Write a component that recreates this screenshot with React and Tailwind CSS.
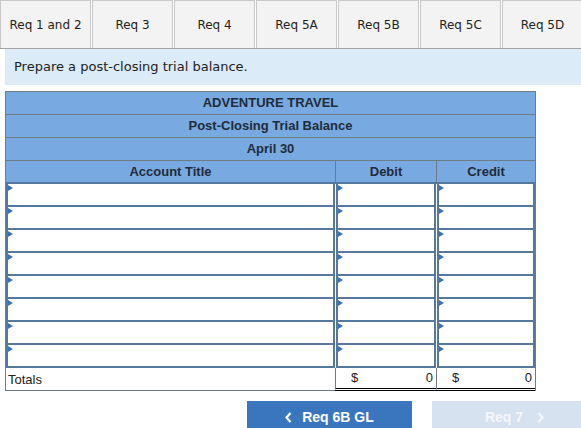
import React from "react";

const tabs = ["Req 1 and 2", "Req 3", "Req 4", "Req 5A", "Req 5B", "Req 5C", "Req 5D"];

const Marker = () => (
  <span className="absolute left-0 top-[1px] w-0 h-0 border-y-[3px] border-y-transparent border-l-[5px] border-l-[#3a72b8]" />
);

const InputCell = ({ first }) => (
  <div className={`relative h-[23px] bg-white border-b-2 border-r-2 border-l-2 border-[#56789d] ${first ? "" : "ml-[1px]"}`}>
    <Marker />
  </div>
);

const App = () => {
  return (
    <div className="w-[581px] h-[428px] overflow-hidden bg-white" style={{ fontFamily: "'Liberation Sans', Arial, sans-serif" }}>
      {/* tabs */}
      <div className="flex gap-[1px] h-[49px] border-b border-[#a3a3a3]" style={{ fontFamily: "'DejaVu Sans', Verdana, sans-serif" }}>
        {tabs.map((t, i) => (
          <div
            key={t}
            className={`shrink-0 flex items-center justify-center bg-[#f3f3f3] border-x border-t border-[#c8c8c8] text-[12px] text-[#222] ${i === 0 ? "w-[91px]" : "w-[81px]"}`}
          >
            {t}
          </div>
        ))}
      </div>

      <div className="ml-[5px] h-[36px] bg-[#dbebf8] flex items-center pl-[9px] text-[13px] text-[#222]" style={{ fontFamily: "'DejaVu Sans', Verdana, sans-serif" }}>
        Prepare a post-closing trial balance.
      </div>

      {/* trial balance */}
      <div className="ml-[5px] mt-[6px] w-[531px] border border-[#6f7b87] text-[#1f2c3a]">
        {["ADVENTURE TRAVEL", "Post-Closing Trial Balance", "April 30"].map((h) => (
          <div key={h} className="h-[23px] bg-[#78a9e0] border-b border-[#6f7b87] flex items-center justify-center text-[13px] font-bold">
            {h}
          </div>
        ))}
        <div className="grid grid-cols-[329px_101px_99px] h-[23px] bg-[#78a9e0] text-[13px] font-bold border-b-2 border-[#56789d]">
          <div className="flex items-center justify-center">Account Title</div>
          <div className="flex items-center justify-center border-l border-[#6f7b87]">Debit</div>
          <div className="flex items-center justify-center border-l border-[#6f7b87]">Credit</div>
        </div>
        {Array.from({ length: 8 }).map((_, r) => (
          <div key={r} className="grid grid-cols-[329px_101px_99px]">
            <InputCell first />
            <InputCell />
            <InputCell />
          </div>
        ))}
        <div className="grid grid-cols-[329px_101px_99px] h-[22px] text-[13px] text-[#222]">
          <div className="flex items-center pl-[2px]">Totals</div>
          <div className="flex items-center justify-between pl-[15px] pr-[3px] border-l border-[#6f7b87] border-b-[3px] border-b-black border-double">
            <span>$</span>
            <span>0</span>
          </div>
          <div className="flex items-center justify-between pl-[15px] pr-[3px] border-l border-[#6f7b87] border-b-[3px] border-b-black border-double">
            <span>$</span>
            <span>0</span>
          </div>
        </div>
      </div>

      {/* nav buttons */}
      <div className="flex gap-[20px] ml-[247px] mt-[10px]">
        <button className="shrink-0 w-[165px] h-[32px] bg-[#3a76bd] text-white text-[14px] font-bold flex items-center justify-center gap-[10px]">
          <svg width="7" height="11" viewBox="0 0 7 11" fill="none">
            <polyline points="5.5,1 1.5,5.5 5.5,10" stroke="white" strokeWidth="2.2" />
          </svg>
          <span>Req 6B GL</span>
        </button>
        <button className="shrink-0 w-[165px] h-[32px] bg-[#d6e2f0] text-[#f4f7fb] text-[14px] font-bold flex items-center justify-center gap-[14px]">
          <span>Req 7</span>
          <svg width="7" height="11" viewBox="0 0 7 11" fill="none">
            <polyline points="1.5,1 5.5,5.5 1.5,10" stroke="#f4f7fb" strokeWidth="2.2" />
          </svg>
        </button>
      </div>
    </div>
  );
};

export default App;
